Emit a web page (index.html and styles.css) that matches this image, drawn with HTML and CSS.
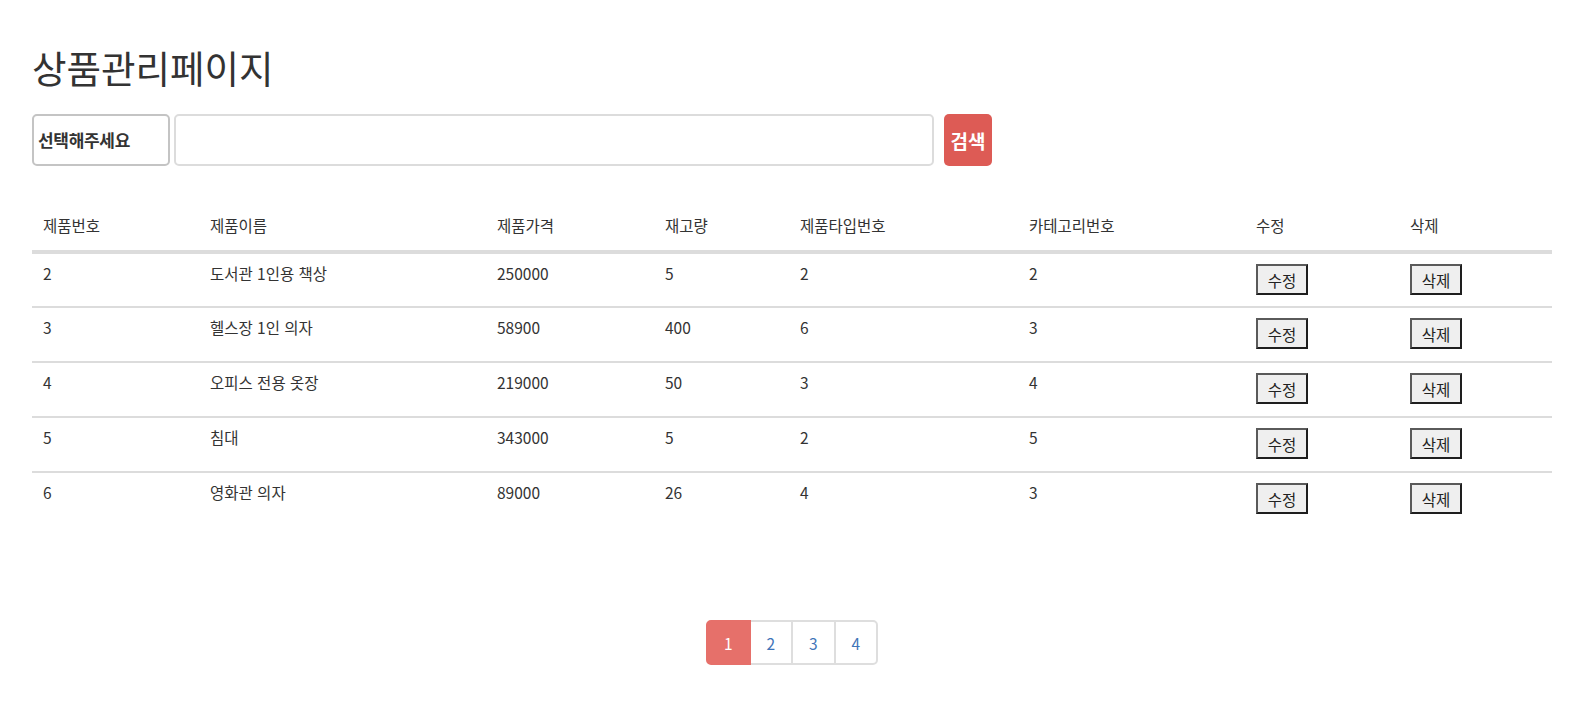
FILE: index.html
```html
<!DOCTYPE html>
<html lang="ko">
<head>
<meta charset="utf-8">
<title>상품관리페이지</title>
<link rel="stylesheet" href="styles.css">
</head>
<body>
<div class="container">
  <h1 class="title">상품관리페이지</h1>
  <form class="search">
    <div class="select">선택해주세요</div>
    <input class="query" type="text">
    <button class="search-btn" type="button">검색</button>
  </form>
  <table class="products">
    <thead>
      <tr>
        <th class="c1">제품번호</th>
        <th class="c2">제품이름</th>
        <th class="c3">제품가격</th>
        <th class="c4">재고량</th>
        <th class="c5">제품타입번호</th>
        <th class="c6">카테고리번호</th>
        <th class="c7">수정</th>
        <th class="c8">삭제</th>
      </tr>
    </thead>
    <tbody>
      <tr><td>2</td><td>도서관 1인용 책상</td><td>250000</td><td>5</td><td>2</td><td>2</td><td><button class="btn">수정</button></td><td><button class="btn">삭제</button></td></tr>
      <tr><td>3</td><td>헬스장 1인 의자</td><td>58900</td><td>400</td><td>6</td><td>3</td><td><button class="btn">수정</button></td><td><button class="btn">삭제</button></td></tr>
      <tr><td>4</td><td>오피스 전용 옷장</td><td>219000</td><td>50</td><td>3</td><td>4</td><td><button class="btn">수정</button></td><td><button class="btn">삭제</button></td></tr>
      <tr><td>5</td><td>침대</td><td>343000</td><td>5</td><td>2</td><td>5</td><td><button class="btn">수정</button></td><td><button class="btn">삭제</button></td></tr>
      <tr><td>6</td><td>영화관 의자</td><td>89000</td><td>26</td><td>4</td><td>3</td><td><button class="btn">수정</button></td><td><button class="btn">삭제</button></td></tr>
    </tbody>
  </table>
  <nav class="pager">
    <ul class="pagination">
      <li class="page active">1</li>
      <li class="page">2</li>
      <li class="page">3</li>
      <li class="page">4</li>
    </ul>
  </nav>
</div>
</body>
</html>
```

FILE: styles.css
```css
* { box-sizing: border-box; }
html, body { margin: 0; padding: 0; background: #fff; }
body {
  font-family: "Noto Sans CJK KR", "Noto Sans", sans-serif;
  color: #333;
  font-size: 15.5px;
  line-height: 20px;
}
.container {
  width: 1574px;
  padding: 0 22px 0 32px;
}
.title {
  margin: 0;
  padding-top: 40px;
  font-size: 37.5px;
  font-weight: 400;
  line-height: 54px;
  height: 92px;
  color: #333;
}
.search {
  display: flex;
  align-items: stretch;
  height: 52px;
  margin: 22px 0 0 0;
}
.select {
  width: 138px;
  border: 2px solid #c4c4c4;
  border-radius: 5px;
  font-size: 17px;
  font-weight: 700;
  display: flex;
  align-items: center;
  padding-left: 4px;
  letter-spacing: -0.3px;
}
.query {
  width: 760px;
  margin-left: 4px;
  border: 2px solid #dcdcdc;
  border-radius: 5px;
  font: inherit;
}
.search-btn {
  margin-left: 10px;
  width: 48px;
  border: 0;
  border-radius: 5px;
  background: #dd5b55;
  color: #fff;
  font-family: inherit;
  font-size: 19px;
  font-weight: 700;
  padding: 0;
}
.products {
  margin-top: 48px;
  width: 1520px;
  border-collapse: collapse;
  table-layout: fixed;
}
.products th, .products td {
  text-align: left;
  vertical-align: top;
  padding: 8px 11px;
  font-weight: 400;
}
.products th {
  border-bottom: 4px solid #dcdcdc;
  height: 38px;
  padding-top: 1px;
  padding-bottom: 0;
}
.products td {
  border-top: 2px solid #dcdcdc;
  height: 55px;
  padding-top: 9px;
}
.c1 { width: 167px; }
.c2 { width: 287px; }
.c3 { width: 168px; }
.c4 { width: 135px; }
.c5 { width: 229px; }
.c6 { width: 227px; }
.c7 { width: 154px; }
.c8 { width: 153px; }
.btn {
  display: block;
  width: 52px;
  height: 31px;
  margin-top: 1px;
  padding: 0;
  background: #efefef;
  border: 2px solid;
  border-color: #5a5a5a #1e1e1e #1e1e1e #5a5a5a;
  font-family: "Noto Sans CJK KR", sans-serif;
  font-size: 15.5px;
  color: #222;
  line-height: 26px;
}
.pager {
  display: flex;
  justify-content: center;
  margin-top: 93px;
}
.pagination {
  display: flex;
  list-style: none;
  margin: 0;
  padding: 0;
}
.page {
  width: 44.5px;
  height: 45px;
  border: 2px solid #dedede;
  margin-left: -2px;
  display: flex;
  align-items: center;
  justify-content: center;
  color: #3f74b8;
  font-size: 15.5px;
  background: #fff;
}
.page:first-child { margin-left: 0; border-radius: 5px 0 0 5px; }
.page:last-child { border-radius: 0 5px 5px 0; }
.page.active {
  background: #e6706a;
  border-color: #e6706a;
  color: #fff;
  position: relative;
  z-index: 1;
}
```
